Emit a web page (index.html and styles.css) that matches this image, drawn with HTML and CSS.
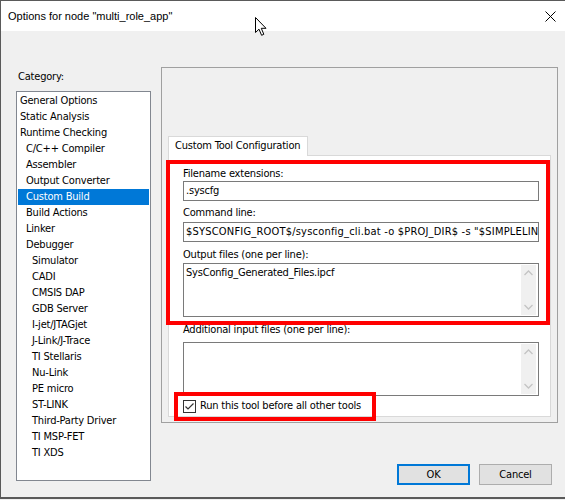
FILE: index.html
```html
<!DOCTYPE html>
<html>
<head>
<meta charset="utf-8">
<link rel="stylesheet" href="styles.css">
</head>
<body>
<div class="window">
  <div class="titlebar">
    <span class="title">Options for node "multi_role_app"</span>
    <svg class="close" width="11" height="11" viewBox="0 0 11 11"><path d="M0.5 0.5 L10.5 10.5 M10.5 0.5 L0.5 10.5" stroke="#000" stroke-width="1" fill="none"/></svg>
  </div>
  <div class="body">
    <div class="left">
      <div class="cat-label">Category:</div>
      <ul class="list">
        <li class="l0">General Options</li>
        <li class="l0">Static Analysis</li>
        <li class="l0">Runtime Checking</li>
        <li class="l1">C/C++ Compiler</li>
        <li class="l1">Assembler</li>
        <li class="l1">Output Converter</li>
        <li class="l1 sel">Custom Build</li>
        <li class="l1">Build Actions</li>
        <li class="l1">Linker</li>
        <li class="l1">Debugger</li>
        <li class="l2">Simulator</li>
        <li class="l2">CADI</li>
        <li class="l2">CMSIS DAP</li>
        <li class="l2">GDB Server</li>
        <li class="l2">I-jet/JTAGjet</li>
        <li class="l2">J-Link/J-Trace</li>
        <li class="l2">TI Stellaris</li>
        <li class="l2">Nu-Link</li>
        <li class="l2">PE micro</li>
        <li class="l2">ST-LINK</li>
        <li class="l2">Third-Party Driver</li>
        <li class="l2">TI MSP-FET</li>
        <li class="l2">TI XDS</li>
      </ul>
    </div>
    <div class="right">
      <div class="group">
        <div class="tabs"><div class="tab">Custom Tool Configuration</div></div>
        <div class="page">
          <div class="lbl lbl1">Filename extensions:</div>
          <div class="field">.syscfg</div>
          <div class="lbl lbl2">Command line:</div>
          <div class="field field2">$SYSCONFIG_ROOT$/sysconfig_cli.bat -o $PROJ_DIR$ -s "$SIMPLELINK_CC13XX_CC26XX_SDK_INSTALL_DIR$/.metadata/product.json"</div>
          <div class="lbl lbl3">Output files (one per line):</div>
          <div class="area area1">
            <div class="area-text">SysConfig_Generated_Files.ipcf</div>
            <div class="sb">
              <svg width="9" height="6" viewBox="0 0 9 6"><path d="M0.5 5 L4.5 1 L8.5 5" stroke="#c4c4c4" stroke-width="1.3" fill="none"/></svg>
              <svg width="9" height="6" viewBox="0 0 9 6"><path d="M0.5 1 L4.5 5 L8.5 1" stroke="#c4c4c4" stroke-width="1.3" fill="none"/></svg>
            </div>
          </div>
          <div class="lbl lbl4">Additional input files (one per line):</div>
          <div class="area area2">
            <div class="area-text"></div>
            <div class="sb">
              <svg width="9" height="6" viewBox="0 0 9 6"><path d="M0.5 5 L4.5 1 L8.5 5" stroke="#c4c4c4" stroke-width="1.3" fill="none"/></svg>
              <svg width="9" height="6" viewBox="0 0 9 6"><path d="M0.5 1 L4.5 5 L8.5 1" stroke="#c4c4c4" stroke-width="1.3" fill="none"/></svg>
            </div>
          </div>
          <div class="check-row">
            <svg class="checkbox" width="13" height="13" viewBox="0 0 13 13"><rect x="0.5" y="0.5" width="12" height="12" fill="#fff" stroke="#333"/><path d="M2.5 6.5 L5 9 L10.5 3.5" stroke="#333" stroke-width="1.2" fill="none"/></svg>
            <span>Run this tool before all other tools</span>
          </div>
        </div>
      </div>
      <div class="buttons">
        <div class="btn ok">OK</div>
        <div class="btn">Cancel</div>
      </div>
    </div>
  </div>
  <div class="annot box1"></div>
  <div class="annot box2"></div>
  <svg class="cursor" width="13" height="20" viewBox="0 0 13 20"><path d="M0.5 0.5 L0.5 15.5 L4 12.2 L6.6 18.3 L8.8 17.3 L6.3 11.3 L11 11.3 Z" fill="#fff" stroke="#000" stroke-width="1" stroke-linejoin="miter"/></svg>
</div>
</body>
</html>
```

FILE: styles.css
```css
* { box-sizing: border-box; }
html, body { margin: 0; padding: 0; }
body {
  width: 565px;
  height: 500px;
  overflow: hidden;
  background: #f0f0f0;
  font-family: "DejaVu Sans Condensed", "DejaVu Sans", sans-serif;
  font-size: 11px;
  letter-spacing: -0.2px;
  color: #000;
}
.window {
  position: relative;
  width: 565px;
  height: 499px;
  border-top: 1px solid #5a5a5a;
  border-left: 1px solid #5a5a5a;
  border-bottom: 2px solid #5a5a5a;
  background: #f0f0f0;
}
.titlebar {
  height: 30px;
  background: #fff;
  display: flex;
  align-items: center;
  justify-content: space-between;
  padding: 0 9px 0 7px;
}
.title {
  font-family: "Liberation Sans", Arial, sans-serif;
  font-size: 11px;
  letter-spacing: 0;
  line-height: 16px;
}
.close { display: block; }
.body {
  display: flex;
  gap: 10px;
  padding: 36px 0 0 15px;
  height: 466px;
}
.left { width: 135px; }
.cat-label {
  margin: 3px 0 0 2px;
  line-height: 14px;
}
.list {
  list-style: none;
  margin: 7px 0 0 0;
  padding: 1px;
  height: 390px;
  background: #fff;
  border: 1px solid #828790;
}
.list li {
  height: 16px;
  line-height: 16px;
  white-space: nowrap;
}
.list .l0 { padding-left: 2px; }
.list .l1 { padding-left: 8px; }
.list .l2 { padding-left: 14px; }
.list .sel { background: #0078d7; color: #fff; }
.right { width: 397px; }
.group {
  height: 356px;
  border: 1px solid #a0a0a0;
  padding: 68px 6px 5px 6px;
  display: flex;
  flex-direction: column;
}
.tabs { display: flex; }
.tab {
  position: relative;
  z-index: 1;
  width: 140px;
  height: 20px;
  margin-bottom: -1px;
  background: #fff;
  border: 1px solid #d9d9d9;
  border-bottom: none;
  padding-left: 6px;
  line-height: 18px;
  white-space: nowrap;
}
.page {
  flex: 1;
  background: #fff;
  border: 1px solid #d9d9d9;
  padding: 11px 0 0 14px;
}
.lbl { line-height: 14px; white-space: nowrap; }
.lbl2 { margin-top: 5px; }
.lbl3 { margin-top: 6px; }
.lbl4 { margin-top: 6px; }
.field {
  width: 356px;
  height: 20px;
  border: 1px solid #7a7a7a;
  padding-left: 2px;
  line-height: 18px;
  white-space: nowrap;
  overflow: hidden;
}
.field2 { letter-spacing: 0.2px; }
.lbl2 + .field { margin-top: 2px; }
.area {
  width: 356px;
  height: 54px;
  border: 1px solid #7a7a7a;
  display: flex;
}
.area1 { margin-top: 1px; }
.area2 { margin-top: 5px; }
.area-text {
  flex: 1;
  padding: 1px 0 0 2px;
  line-height: 16px;
}
.sb {
  width: 15px;
  margin: 1px 2px 1px 0;
  background: #f0f0f0;
  display: flex;
  flex-direction: column;
  align-items: center;
  justify-content: space-between;
  padding: 5px 0 5px 0;
}
.sb svg { display: block; }
.check-row {
  margin-top: 3px;
  display: flex;
  align-items: center;
  gap: 4px;
  height: 14px;
  line-height: 14px;
}
.checkbox { display: block; }
.buttons {
  margin-top: 41px;
  display: flex;
  justify-content: flex-end;
  gap: 9px;
  padding-right: 6px;
}
.btn {
  width: 73px;
  height: 21px;
  background: #e1e1e1;
  border: 1px solid #adadad;
  text-align: center;
  line-height: 19px;
}
.btn.ok { border: 2px solid #0078d7; line-height: 17px; }
.annot {
  position: absolute;
  border: 4px solid #ff0000;
}
.box1 { left: 165px; top: 159px; width: 384px; height: 165px; }
.box2 { left: 173px; top: 391px; width: 202px; height: 29px; }
.cursor { position: absolute; left: 254px; top: 16px; }
```
